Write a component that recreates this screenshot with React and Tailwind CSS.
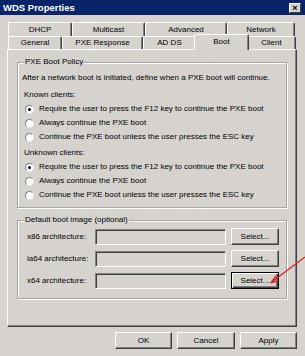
import React from "react";

const F = "font-['Liberation_Sans','Arial',sans-serif]";

function Tab({ label, w, selected }) {
  return (
    <div
      className={
        "flex items-center justify-center rounded-t-[2px] border-t border-l border-r border-t-white border-l-white border-r-[#404040] shadow-[inset_-1px_0_0_#808080] " +
        (selected
          ? "relative z-10 -mt-[2px] -mx-[2px] h-[16px] -mb-[1px] bg-[#d6d3ce] pb-[2px]"
          : "h-full bg-[#d6d3ce]")
      }
      style={{ width: selected ? w + 4 : w }}
    >
      {label}
    </div>
  );
}

function Radio({ checked, label }) {
  return (
    <div className="flex items-center h-[14px]">
      <div className="ml-[3px] w-[9px] h-[9px] rounded-full bg-white border border-t-[#808080] border-l-[#808080] border-r-[#e8e8e8] border-b-[#e8e8e8] flex items-center justify-center">
        {checked && <div className="w-[3px] h-[3px] rounded-full bg-black" />}
      </div>
      <span className="ml-[5px]">{label}</span>
    </div>
  );
}

function Btn({ children, w, focus, h = 17 }) {
  return (
    <div
      className={
        "flex items-center justify-center bg-[#d6d3ce] " +
        (focus
          ? "border border-black shadow-[inset_1px_1px_0_#ffffff,inset_-1px_-1px_0_#404040,inset_-2px_-2px_0_#808080]"
          : "border border-t-white border-l-white border-r-[#404040] border-b-[#404040] shadow-[inset_-1px_-1px_0_#808080]")
      }
      style={{ width: w, height: h }}
    >
      {children}
    </div>
  );
}

function Group({ title, className, children }) {
  return (
    <div
      className={
        "relative border border-[#a8a59f] shadow-[1px_1px_0_#ffffff,inset_1px_1px_0_#ffffff] " +
        className
      }
    >
      <span className="absolute -top-[6px] left-[6px] bg-[#d6d3ce] px-[1px] leading-[10px]">
        {title}
      </span>
      {children}
    </div>
  );
}

function ArchRow({ label, focus }) {
  return (
    <div className="flex items-center h-[17px]">
      <span className="w-[68px] ml-[9px] whitespace-nowrap">{label}</span>
      <div className="w-[131px] h-[16px] bg-[#d6d3ce] border border-t-[#808080] border-l-[#808080] border-r-white border-b-white shadow-[inset_1px_1px_0_#404040]" />
      <div className="ml-[5px]">
        <Btn w={48} focus={focus}>Select...</Btn>
      </div>
    </div>
  );
}

export default function App() {
  return (
    <div
      className={
        "relative w-[305px] h-[356px] bg-[#d6d3ce] flex flex-col text-[8px] leading-[14px] text-black overflow-hidden " +
        F
      }
    >
      {/* title bar */}
      <div className="h-[15px] bg-[#0a246a] flex items-center justify-between pl-[3px] pr-[4px]">
        <span className="text-white font-bold text-[9.5px] leading-[15px]">WDS Properties</span>
        <div className="w-[12px] h-[10px] bg-[#d6d3ce] border border-t-white border-l-white border-r-[#404040] border-b-[#404040] flex items-center justify-center text-[9px] font-bold leading-[8px]">
          ×
        </div>
      </div>

      {/* tabs + panel */}
      <div className="pl-[7px] pr-[8px] pt-[7px]">
        <div className="flex h-[14px] ml-[1px]">
          <Tab label="DHCP" w={64} />
          <Tab label="Multicast" w={73} />
          <Tab label="Advanced" w={82} />
          <Tab label="Network" w={68} />
        </div>
        <div className="flex h-[13px] ml-[1px]">
          <Tab label="General" w={54} />
          <Tab label="PXE Response" w={81} />
          <Tab label="AD DS" w={53} />
          <Tab label="Boot" w={51} selected />
          <Tab label="Client" w={49} />
        </div>
        <div className="h-[278px] border border-t-white border-l-white border-r-[#404040] border-b-[#404040] shadow-[inset_-1px_-1px_0_#808080] pt-[12px] pl-[9px] pr-[9px]">
          <Group title="PXE Boot Policy" className="h-[146px] pl-[4px] pt-[8px]">
            <div>After a network boot is initiated, define when a PXE boot will continue.</div>
            <div className="mt-[3px] ml-[2px]">Known clients:</div>
            <Radio checked label="Require the user to press the F12 key to continue the PXE boot" />
            <Radio label="Always continue the PXE boot" />
            <Radio label="Continue the PXE boot unless the user presses the ESC key" />
            <div className="mt-[2px] ml-[2px]">Unknown clients:</div>
            <Radio checked label="Require the user to press the F12 key to continue the PXE boot" />
            <Radio label="Always continue the PXE boot" />
            <Radio label="Continue the PXE boot unless the user presses the ESC key" />
          </Group>
          <Group title="Default boot image (optional)" className="mt-[12px] h-[79px] pt-[7px] flex flex-col gap-[5px]">
            <ArchRow label="x86 architecture:" />
            <ArchRow label="ia64 architecture:" />
            <ArchRow label="x64 architecture:" focus />
          </Group>
        </div>
      </div>

      {/* bottom buttons */}
      <div className="flex justify-end gap-[5px] pr-[8px] mt-[5px]">
        <Btn w={57}>OK</Btn>
        <Btn w={58}>Cancel</Btn>
        <Btn w={57}>Apply</Btn>
      </div>

      {/* red annotation arrow */}
      <svg
        className="absolute left-0 top-0 pointer-events-none"
        width="305"
        height="356"
        viewBox="0 0 305 356"
      >
        <line x1="305" y1="257" x2="273" y2="281" stroke="#e0201c" strokeWidth="1.3" />
        <polyline points="276,276 271,282.5 278.5,281" fill="none" stroke="#e0201c" strokeWidth="1.3" />
      </svg>
    </div>
  );
}
